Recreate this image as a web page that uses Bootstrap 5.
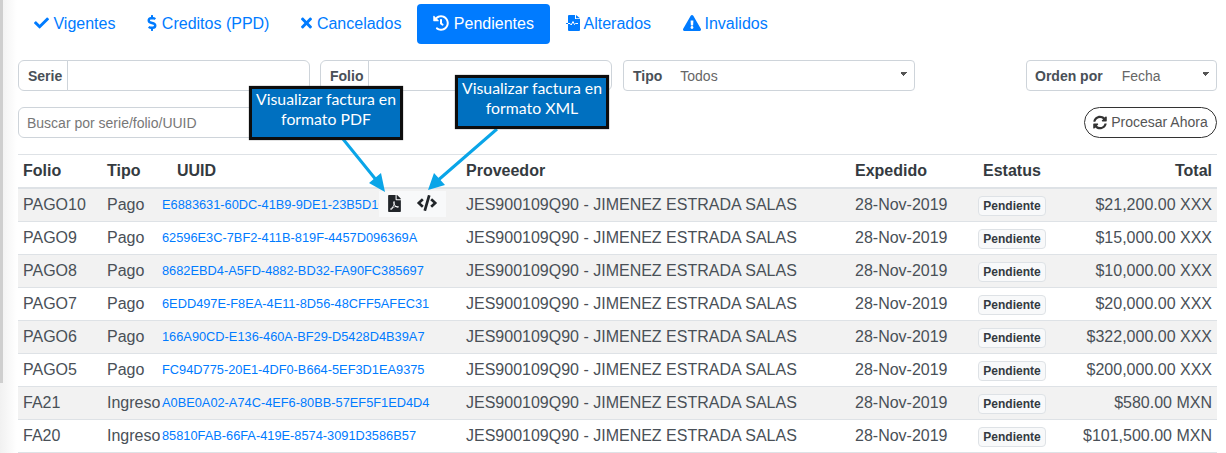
<!DOCTYPE html>
<html lang="es">
<head>
  <meta charset="UTF-8">
  <title>Pendientes</title>
  <meta name="viewport" content="width=device-width, initial-scale=1">
  <link href="https://cdn.jsdelivr.net/npm/bootstrap@5.3.0/dist/css/bootstrap.min.css" rel="stylesheet">
  <style>
    html, body { height: 453px; overflow: hidden; }
    body { position: relative; font-family: "Liberation Sans", Arial, sans-serif; font-size: 16px; color: #495057; background: #fff; }
    .side-shade { position: absolute; left: 0; top: 0; width: 17px; height: 453px; background: linear-gradient(90deg, #f1f1f1, #fff); }
    .side-bar { position: absolute; left: 0; top: 0; width: 3px; height: 383px; background: #cfcfcf; }
    .page-wrap { position: relative; padding: 4px 9px 0 18px; }

    .tabs .nav-link { height: 40px; padding: 8px 16px; line-height: 24px; color: #007bff; border-radius: 4px; white-space: nowrap; }
    .tabs .nav-link.active { background: #007bff; color: #fff; }
    .ico { width: 1em; height: 1em; fill: currentColor; vertical-align: -2px; }
    .ico-check { width: 15px; }
    .ico-dollar { width: 10px; }
    .ico-times { width: 11px; }
    .ico-file { width: 14px; }
    .ico-warn { width: 18px; margin-right: -1px; }

    .filters { margin-top: 16px; height: 31px; }
    .filter-box { flex: none; width: 292px; height: 31px; flex-wrap: nowrap; }
    .filter-box .input-group-text { font-size: 14px; font-weight: 700; color: #495057; background: #fff; border-color: #ced4da; padding: 1px 5px 0 9px; height: 31px; }
    .filter-box .form-control { height: 31px; padding: 0 8px; font-size: 14px; border-color: #ced4da; }
    .gap-serie { margin-right: 10px; }
    .gap-folio { margin-right: 11px; }
    .select-box { border: 1px solid #ced4da; border-radius: 4px; height: 31px; }
    .select-box .input-group-text { border: 0; height: 29px; }
    .select-box .form-select { height: 29px; border: 0; margin: 0 !important; padding: 1px 16px 0 0; font-size: 14px; color: #666; box-shadow: none;
      background-image: linear-gradient(45deg, transparent 50%, #555 50%), linear-gradient(-45deg, transparent 50%, #555 50%);
      background-size: 3px 5px, 3px 5px; background-position: right 10px top 11px, right 7px top 11px; }
    .tipo-box .input-group-text { padding-right: 18px; padding-left: 9px; }
    .orden-box { width: 191px; }
    .orden-box .input-group-text { padding-left: 8px; padding-right: 19px; }

    .search-row { margin-top: 16px; height: 31px; }
    .search-input { width: 292px; height: 31px; font-size: 14px; padding: 0 8px; border-color: #ced4da; }
    .search-input::placeholder { color: #777; opacity: 1; }
    .process-btn { height: 31px; width: 133px; padding: 0; font-size: 14px; color: #555; border: 1px solid #333; border-radius: 16px; background: #fff; white-space: nowrap; }
    .process-btn .ico { color: #333; width: 14px; height: 15px; vertical-align: -3px; }

    .doc-table { table-layout: fixed; width: 1199px; margin: 16px 0 0; border-top: 1px solid #dee2e6; --bs-table-color: #495057; --bs-table-striped-color: #495057; --bs-table-active-color: #495057; --bs-table-color-state: #495057; color: #495057; }
    .doc-table th, .doc-table td { padding: 0 5px; height: 33px; line-height: 32px; white-space: nowrap; overflow: hidden; vertical-align: middle; font-size: 16px; border-color: #dee2e6; }
    .doc-table th { --bs-table-color-state: #343a40; color: #343a40; font-weight: 700; border-bottom-width: 2px; }
    .doc-table .th-uuid { padding-left: 17px; }
    .doc-table .td-uuid { padding: 0 2px; font-size: 12.8px; }
    .doc-table .td-uuid a { color: #007bff; text-decoration: none; }
    .doc-table .td-status { padding: 2px 0 0; line-height: 20px; }
    .status-tag { display: block; width: 68px; height: 20px; line-height: 18px; font-size: 12px; font-weight: 700; color: #343a40; text-align: center; background: #f8f9fa; border: 1px solid #dee2e6; border-radius: 4px; }

    .row-tools { position: absolute; left: 379px; top: 191px; width: 67px; height: 26px; background: #f8f9fa; }
    .row-tools svg { position: absolute; fill: #212529; }
    .tool-pdf { left: 9px; top: 4px; width: 13px; height: 17px; }
    .tool-xml { left: 38px; top: 4px; width: 20px; height: 16px; }

    .note { position: absolute; width: 154px; height: 54px; background: #0070c0; border: 3px solid #0d0d0d; box-shadow: 0 0 1px #555; color: #fff; font-family: Lato, "Liberation Sans", sans-serif; font-size: 15.8px; line-height: 19.5px; text-align: center; }
    .note-pdf { left: 249px; top: 86px; }
    .note-xml { left: 455px; top: 75px; }
    .arrows { position: absolute; left: 0; top: 0; width: 1226px; height: 453px; pointer-events: none; }
  </style>
</head>
<body>
  <div class="side-shade"></div>
  <div class="side-bar"></div>

  <div class="page-wrap">
    <ul class="nav nav-pills tabs flex-nowrap">
      <li class="nav-item"><a class="nav-link" href="#"><svg class="ico ico-check" viewBox="0 0 512 512"><path d="M173.898 439.404l-166.4-166.4c-9.997-9.997-9.997-26.206 0-36.204l36.203-36.204c9.997-9.998 26.207-9.998 36.204 0L192 312.69 432.095 72.596c9.997-9.997 26.207-9.997 36.204 0l36.203 36.204c9.997 9.997 9.997 26.206 0 36.204l-294.4 294.401c-9.998 9.997-26.207 9.997-36.204-.001z"/></svg> Vigentes</a></li>
      <li class="nav-item"><a class="nav-link" href="#"><svg class="ico ico-dollar" viewBox="0 0 288 512"><path d="M209.2 233.4l-108-31.6C88.7 198.2 80 186.5 80 173.5c0-16.3 13.2-29.5 29.5-29.5h66.3c12.2 0 24.2 3.7 34.2 10.5 6.1 4.1 14.3 3.1 19.5-2l34.8-34c7.1-6.9 6.1-18.4-1.8-24.5C238 74.8 207.4 64.1 176 64V16c0-8.8-7.2-16-16-16h-32c-8.8 0-16 7.2-16 16v48h-2.5C45.8 64-5.4 118.7.5 183.6c4.2 46.1 39.4 83.6 83.8 96.6l102.5 30c12.5 3.7 21.2 15.3 21.2 28.3 0 16.3-13.2 29.5-29.5 29.5h-66.3C100 368 88 364.3 78 357.5c-6.1-4.1-14.3-3.1-19.5 2l-34.8 34c-7.1 6.9-6.1 18.4 1.8 24.5 24.5 19.2 55.1 29.9 86.5 30v48c0 8.8 7.2 16 16 16h32c8.8 0 16-7.2 16-16v-48.2c46.6-.9 90.3-28.6 105.7-72.7 21.5-61.6-14.6-124.8-72.5-141.7z"/></svg> Creditos (PPD)</a></li>
      <li class="nav-item"><a class="nav-link" href="#"><svg class="ico ico-times" viewBox="0 0 352 512"><path d="M242.72 256l100.07-100.07c12.28-12.28 12.28-32.19 0-44.48l-22.24-22.24c-12.28-12.28-32.19-12.28-44.48 0L176 189.28 75.93 89.21c-12.28-12.28-32.19-12.28-44.48 0L9.21 111.45c-12.28 12.28-12.28 32.19 0 44.48L109.28 256 9.21 356.07c-12.28 12.28-12.28 32.19 0 44.48l22.24 22.24c12.28 12.28 32.2 12.28 44.48 0L176 322.72l100.07 100.07c12.28 12.28 32.2 12.28 44.48 0l22.24-22.24c12.28-12.28 12.28-32.19 0-44.48L242.72 256z"/></svg> Cancelados</a></li>
      <li class="nav-item"><a class="nav-link active" href="#"><svg class="ico" viewBox="0 0 512 512"><path d="M504 255.531c.253 136.64-111.18 248.372-247.82 248.468-59.015.042-113.223-20.53-155.822-54.911-11.077-8.94-11.905-25.541-1.839-35.607l11.267-11.267c8.609-8.609 22.353-9.551 31.891-1.984C173.062 425.135 212.781 440 256 440c101.705 0 184-82.311 184-184 0-101.705-82.311-184-184-184-48.814 0-93.149 18.969-126.068 49.932l50.754 50.754c10.08 10.08 2.941 27.314-11.313 27.314H24c-8.837 0-16-7.163-16-16V38.627c0-14.254 17.234-21.393 27.314-11.314l49.372 49.372C129.209 34.136 189.552 8 256 8c136.81 0 247.747 110.78 248 247.531zm-180.912 78.784l9.823-12.63c8.138-10.463 6.253-25.542-4.21-33.679L288 256.349V152c0-13.255-10.745-24-24-24h-16c-13.255 0-24 10.745-24 24v135.651l65.409 50.874c10.463 8.137 25.541 6.253 33.679-4.21z"/></svg> Pendientes</a></li>
      <li class="nav-item"><a class="nav-link" href="#"><svg class="ico ico-file" viewBox="0 0 14 16"><path d="M2 1a1 1 0 0 1 1-1h6v4h5v11a1 1 0 0 1-1 1H3a1 1 0 0 1-1-1zM10 0l4 3.200V3.200h-4z"/><path d="M0 8.500h4l1.200 1.500 1.800-3.500 1.500 3 1-1h2.500" fill="none" stroke="#fff" stroke-width="1"/><path d="M0 8h2v1H0z"/></svg> Alterados</a></li>
      <li class="nav-item"><a class="nav-link" href="#"><svg class="ico ico-warn" viewBox="0 0 576 512"><path d="M569.517 440.013C587.975 472.007 564.806 512 527.94 512H48.054c-36.937 0-59.999-40.055-41.577-71.987L246.423 24.028c18.467-32.009 64.72-31.951 83.154 0l239.94 416zM288 354c-25.405 0-46 20.595-46 46s20.595 46 46 46 46-20.595 46-46-20.595-46-46-46zm-43.673-165.346l7.418 136c.347 6.364 5.609 11.346 11.982 11.346h48.546c6.373 0 11.635-4.982 11.982-11.346l7.418-136c.375-6.874-5.098-12.654-11.982-12.654h-63.383c-6.884 0-12.356 5.78-11.981 12.654z"/></svg> Invalidos</a></li>
    </ul>

    <div class="d-flex filters">
      <div class="input-group filter-box gap-serie">
        <span class="input-group-text">Serie</span>
        <input type="text" class="form-control">
      </div>
      <div class="input-group filter-box gap-folio">
        <span class="input-group-text">Folio</span>
        <input type="text" class="form-control">
      </div>
      <div class="input-group filter-box select-box tipo-box">
        <span class="input-group-text">Tipo</span>
        <select class="form-select"><option>Todos</option></select>
      </div>
      <div class="input-group filter-box select-box orden-box ms-auto">
        <span class="input-group-text">Orden por</span>
        <select class="form-select"><option>Fecha</option></select>
      </div>
    </div>

    <div class="d-flex justify-content-between search-row">
      <input type="text" class="form-control search-input" placeholder="Buscar por serie/folio/UUID">
      <button type="button" class="btn process-btn"><svg class="ico" viewBox="0 0 512 512"><path d="M370.72 133.28C339.458 104.008 298.888 87.962 255.848 88c-77.458.068-144.328 53.178-162.791 126.85-1.344 5.363-6.122 9.15-11.651 9.15H24.103c-7.498 0-13.194-6.807-11.807-14.176C33.933 94.924 134.813 8 256 8c66.448 0 126.791 26.136 171.315 68.685L463.03 40.97C478.149 25.851 504 36.559 504 57.941V192c0 13.255-10.745 24-24 24H345.941c-21.382 0-32.09-25.851-16.971-40.971l41.75-41.749zM32 296h134.059c21.382 0 32.09 25.851 16.971 40.971l-41.75 41.75c31.262 29.273 71.835 45.319 114.876 45.28 77.418-.07 144.315-53.144 162.787-126.849 1.344-5.363 6.122-9.15 11.651-9.15h57.304c7.498 0 13.194 6.807 11.807 14.176C478.067 417.076 377.187 504 256 504c-66.448 0-126.791-26.136-171.315-68.685L48.97 471.03C33.851 486.149 8 475.441 8 454.059V320c0-13.255 10.745-24 24-24z"/></svg> Procesar Ahora</button>
    </div>

    <table class="table table-striped doc-table">
      <colgroup>
        <col style="width:84px"><col style="width:58px"><col style="width:301px"><col style="width:389px"><col style="width:128px"><col style="width:82px"><col style="width:157px">
      </colgroup>
      <thead>
        <tr><th>Folio</th><th>Tipo</th><th class="th-uuid">UUID</th><th>Proveedor</th><th>Expedido</th><th>Estatus</th><th class="text-end">Total</th></tr>
      </thead>
      <tbody id="rows"></tbody>
    </table>
  </div>

  <div class="row-tools">
    <svg class="tool-pdf" viewBox="0 0 384 512"><path d="M181.9 256.1c-5-16-4.9-46.9-2-46.9 8.4 0 7.6 36.9 2 46.9zm-1.7 47.2c-7.7 20.2-17.3 43.3-28.4 62.7 18.3-7 39-17.2 62.9-21.9-12.7-9.6-24.9-23.4-34.5-40.8zM86.1 428.1c0 .8 13.2-5.4 34.9-40.2-6.7 6.3-29.1 24.5-34.9 40.2zM248 160h136v328c0 13.3-10.7 24-24 24H24c-13.3 0-24-10.7-24-24V24C0 10.7 10.7 0 24 0h200v136c0 13.2 10.8 24 24 24zm-8 171.8c-20-12.2-33.3-29-42.7-53.8 4.5-18.5 11.6-46.6 6.2-64.2-4.7-29.4-42.4-26.5-47.8-6.8-5 18.3-.4 44.1 8.1 77-11.6 27.6-28.7 64.6-40.8 85.8-.1 0-.1.1-.2.1-27.1 13.9-73.6 44.5-54.5 68 5.6 6.9 16 10 21.5 10 17.9 0 35.7-18 61.1-61.8 25.8-8.5 54.1-19.1 79-23.2 21.7 11.8 47.1 19.5 64 19.5 29.2 0 31.2-32 19.7-43.4-13.9-13.6-54.3-9.7-73.6-7.2zM377 105L279 7c-4.5-4.5-10.6-7-17-7h-6v128h128v-6.1c0-6.3-2.5-12.4-7-16.9zm-74.1 255.3c4.1-2.7-2.5-11.9-42.8-9 37.1 15.8 42.8 9 42.8 9z"/></svg>
    <svg class="tool-xml" viewBox="0 0 640 512"><path d="M278.9 511.5l-61-17.7c-6.4-1.8-10-8.5-8.2-14.9L346.2 8.7c1.8-6.4 8.5-10 14.9-8.2l61 17.7c6.4 1.8 10 8.5 8.2 14.9L293.8 503.3c-1.9 6.4-8.5 10.1-14.9 8.2zm-114-112.2l43.5-46.4c4.6-4.9 4.3-12.7-.8-17.2L117 256l90.6-79.7c5.1-4.5 5.5-12.3.8-17.2l-43.5-46.4c-4.5-4.8-12.1-5.1-17-.5L3.8 247.2c-5.1 4.7-5.1 12.8 0 17.5l144.1 135.1c4.9 4.6 12.5 4.4 17-.5zm327.2.6l144.1-135.1c5.1-4.7 5.1-12.8 0-17.5L492.1 112.1c-4.8-4.5-12.4-4.3-17 .5L431.6 159c-4.6 4.9-4.3 12.7.8 17.2L523 256l-90.6 79.7c-5.1 4.5-5.5 12.3-.8 17.2l43.5 46.4c4.5 4.9 12.1 5.1 17 .6z"/></svg>
  </div>

  <svg class="arrows" viewBox="0 0 1226 453">
    <path d="M343 139 L377 181 M497 129 L436 182" stroke="#0aa5e8" stroke-width="3" fill="none"/>
    <path d="M385 192 L369 183 L381 173 Z M428 190 L434 173 L445 185 Z" fill="#0aa5e8"/>
  </svg>
  <div class="note note-pdf">Visualizar factura en<br>formato PDF</div>
  <div class="note note-xml">Visualizar factura en<br>formato XML</div>

  <script>
    // filas de la tabla
    const data = [
      ['PAGO10', 'Pago', 'E6883631-60DC-41B9-9DE1-23B5D1C0A7F2', '$21,200.00 XXX'],
      ['PAGO9', 'Pago', '62596E3C-7BF2-411B-819F-4457D096369A', '$15,000.00 XXX'],
      ['PAGO8', 'Pago', '8682EBD4-A5FD-4882-BD32-FA90FC385697', '$10,000.00 XXX'],
      ['PAGO7', 'Pago', '6EDD497E-F8EA-4E11-8D56-48CFF5AFEC31', '$20,000.00 XXX'],
      ['PAGO6', 'Pago', '166A90CD-E136-460A-BF29-D5428D4B39A7', '$322,000.00 XXX'],
      ['PAGO5', 'Pago', 'FC94D775-20E1-4DF0-B664-5EF3D1EA9375', '$200,000.00 XXX'],
      ['FA21', 'Ingreso', 'A0BE0A02-A74C-4EF6-80BB-57EF5F1ED4D4', '$580.00 MXN'],
      ['FA20', 'Ingreso', '85810FAB-66FA-419E-8574-3091D3586B57', '$101,500.00 MXN']
    ];
    document.getElementById('rows').innerHTML = data.map((r, i) => `
      <tr class="${i === 0 ? 'table-active' : ''}">
        <td>${r[0]}</td><td>${r[1]}</td><td class="td-uuid"><a href="#">${r[2]}</a></td>
        <td>JES900109Q90 - JIMENEZ ESTRADA SALAS</td><td>28-Nov-2019</td>
        <td class="td-status"><span class="status-tag">Pendiente</span></td>
        <td class="text-end">${r[3]}</td>
      </tr>`).join('');
  </script>
  <script src="https://cdn.jsdelivr.net/npm/bootstrap@5.3.0/dist/js/bootstrap.bundle.min.js"></script>
</body>
</html>
